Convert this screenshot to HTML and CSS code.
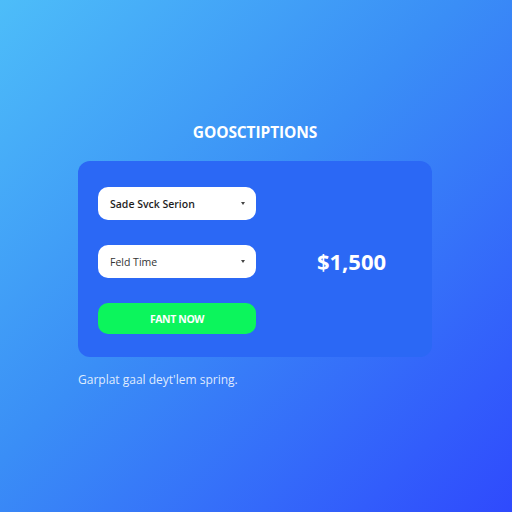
FILE: index.html
```html
<!DOCTYPE html>
<html lang="en">
<head>
    <meta charset="UTF-8">
    <meta name="viewport" content="width=device-width, initial-scale=1.0">
    <title>Goosctiptions</title>
    <link rel="stylesheet" href="styles.css">
</head>
<body>
    <main class="page">
        <h1 class="titre">GOOSCTIPTIONS</h1>

        <section class="carte">
            <div class="formulaire">
                <div class="choix choix-fort">
                    <span>Sade Svck Serion</span>
                    <span class="fleche"></span>
                </div>
                <div class="choix">
                    <span>Feld Time</span>
                    <span class="fleche"></span>
                </div>
                <button class="bouton">FANT NOW</button>
            </div>
            <div class="prix">$1,500</div>
        </section>

        <p class="note">Garplat gaal deyt'lem spring.</p>
    </main>
</body>
</html>
```

FILE: styles.css
```css
/* Fond dégradé bleu */
html, body {
    height: 100%;
}

body {
    margin: 0;
    background: linear-gradient(135deg, #4dbdf9 0%, #3a8ef6 45%, #2f4afd 100%);
    color: #ffffff;
    font-family: "Open Sans", Arial, sans-serif;
}

.page {
    width: 354px;
    margin: 0 0 0 78px;
    padding-top: 121px;
}

.titre {
    margin: 0 0 18px;
    text-align: center;
    font-size: 15.5px;
    font-weight: 700;
    letter-spacing: -0.1px;
    line-height: 22px;
}

.carte {
    display: flex;
    align-items: center;
    height: 196px;
    box-sizing: border-box;
    padding: 26px 20px 23px;
    background-color: #2b68f5;
    border-radius: 12px;
}

.formulaire {
    display: flex;
    flex-direction: column;
    gap: 25px;
    width: 158px;
}

.choix {
    display: flex;
    align-items: center;
    justify-content: space-between;
    height: 33px;
    padding: 0 11px 0 12px;
    background-color: #ffffff;
    border-radius: 10px;
    color: #333333;
    font-size: 10.5px;
}

.choix-fort {
    color: #1e1e1e;
    font-weight: 600;
}

.fleche {
    width: 0;
    height: 0;
    border-left: 2.5px solid transparent;
    border-right: 2.5px solid transparent;
    border-top: 3px solid #444444;
}

.bouton {
    height: 31px;
    border: none;
    border-radius: 10px;
    background-color: #0cf55c;
    color: #ffffff;
    font-family: "Open Sans", Arial, sans-serif;
    font-size: 10.5px;
    font-weight: 700;
    letter-spacing: -0.4px;
}

.prix {
    flex: 1;
    padding-left: 35px;
    text-align: center;
    font-size: 22px;
    font-weight: 700;
}

.note {
    margin: 14px 0 0;
    font-size: 12px;
    color: rgba(255, 255, 255, 0.85);
}
```
